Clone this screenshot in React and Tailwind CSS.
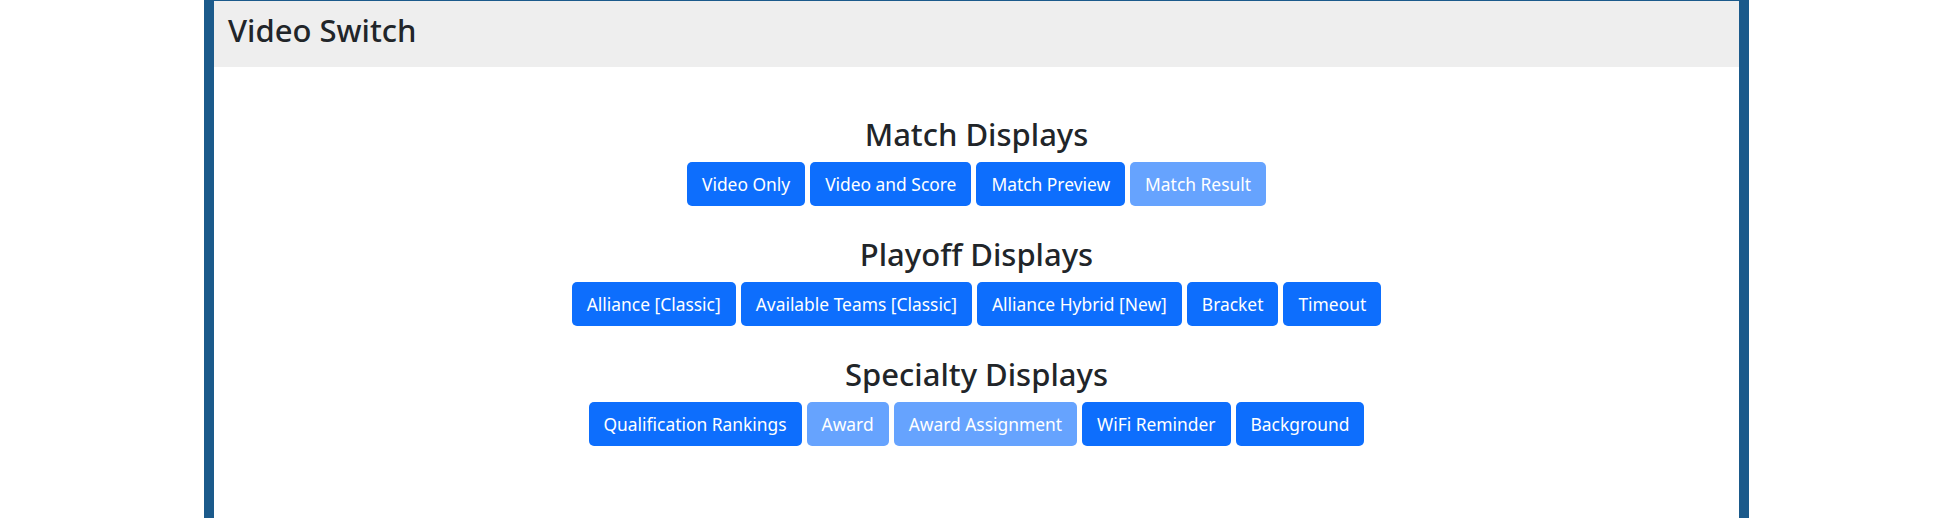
export default function App() {
  const groups = [
    {
      title: "Match Displays",
      buttons: [
        ["Video Only", false],
        ["Video and Score", false],
        ["Match Preview", false],
        ["Match Result", true],
      ],
    },
    {
      title: "Playoff Displays",
      buttons: [
        ["Alliance [Classic]", false],
        ["Available Teams [Classic]", false],
        ["Alliance Hybrid [New]", false],
        ["Bracket", false],
        ["Timeout", false],
      ],
    },
    {
      title: "Specialty Displays",
      buttons: [
        ["Qualification Rankings", false],
        ["Award", true],
        ["Award Assignment", true],
        ["WiFi Reminder", false],
        ["Background", false],
      ],
    },
  ];
  return (
    <div
      className="w-[1946px] h-[518px] bg-white overflow-hidden flex justify-center"
      style={{ fontFamily: '"Noto Sans", "Open Sans", sans-serif' }}
    >
      <div className="ml-[7px] w-[1545px] h-[600px] border-x-[10px] border-t border-[#1b5a8b] bg-white flex flex-col">
        <div className="h-[66px] bg-[#eeeeee] flex items-start pt-[10px] pl-[14px]">
          <h4 className="text-[31px] leading-[38px] text-[#212529] font-medium">Video Switch</h4>
        </div>
        <div className="flex flex-col items-center pt-[48px]">
          {groups.map((g) => (
            <div key={g.title} className="flex flex-col items-center mb-[29px]">
              <h3 className="text-[31px] leading-[38px] text-[#212529] font-medium mb-[9px]">{g.title}</h3>
              <div className="flex gap-[5px]">
                {g.buttons.map(([label, dis]) => (
                  <div
                    key={label}
                    className={
                      "h-[44px] px-[15px] flex items-center rounded-[5px] text-white text-[17.4px] " +
                      (dis ? "bg-[#66a3fe]" : "bg-[#0d6efd]")
                    }
                  >
                    {label}
                  </div>
                ))}
              </div>
            </div>
          ))}
        </div>
      </div>
    </div>
  );
}
